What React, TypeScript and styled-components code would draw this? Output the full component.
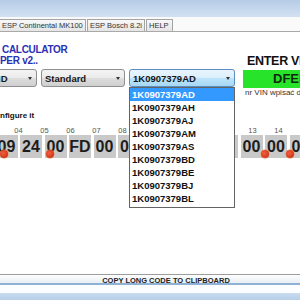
import React from "react";
import styled, { createGlobalStyle } from "styled-components";

const Global = createGlobalStyle`
  html, body { margin: 0; padding: 0; background: #fff; }
  body { font-family: "Liberation Sans", Arial, sans-serif; }
`;

const Frame = styled.div`
  width: 300px;
  height: 300px;
  overflow: hidden;
  display: flex;
  flex-direction: column;
  background: #fff;
`;

const TitleBar = styled.div`
  height: 17px;
  flex: none;
  background: linear-gradient(#b6cce6, #d2e1f2);
`;

const TabStrip = styled.div`
  height: 14px;
  flex: none;
  display: flex;
  align-items: flex-end;
  gap: 1px;
  background: #fafafa;
  border-bottom: 1px solid #a9a9a9;
`;

const Tab = styled.div<{ $w: number; $ml?: number }>`
  width: ${(p) => p.$w}px;
  margin-left: ${(p) => p.$ml ?? 0}px;
  height: 12px;
  box-sizing: border-box;
  border: 1px solid #a4a4a4;
  border-bottom: none;
  background: linear-gradient(#f8f8f8, #e5e5e5);
  font-size: 7.5px;
  line-height: 11px;
  color: #333;
  padding-left: 2px;
  white-space: nowrap;
  overflow: hidden;
`;

const Main = styled.div`
  flex: 1;
  display: flex;
  flex-direction: column;
`;

const TopSection = styled.div`
  display: flex;
  height: 66px;
  flex: none;
`;

const LeftPane = styled.div`
  width: 243px;
  flex: none;
  padding-top: 12px;
`;

const TitleLine = styled.div<{ $indent: number }>`
  color: #2b2fb5;
  font-weight: bold;
  font-size: 10px;
  line-height: 11px;
  letter-spacing: -0.3px;
  padding-left: ${(p) => p.$indent}px;
  white-space: nowrap;
`;

const ComboRow = styled.div`
  display: flex;
  gap: 4px;
  margin-top: 3px;
  margin-left: -18px;
`;

const ComboWrap = styled.div`
  position: relative;
`;

const Combo = styled.div<{ $w: number; $focus?: boolean; $pl?: number }>`
  width: ${(p) => p.$w}px;
  height: 18px;
  box-sizing: border-box;
  display: flex;
  align-items: center;
  justify-content: space-between;
  padding: 0 4px 0 ${(p) => p.$pl ?? 3}px;
  border: 1px solid ${(p) => (p.$focus ? "#5b8fc0" : "#8e8f8f")};
  border-radius: 3px;
  background: ${(p) =>
    p.$focus
      ? "linear-gradient(#eaf5fd 0%, #d9effc 50%, #bee3fb 51%, #a7d9f5 100%)"
      : "linear-gradient(#f3f3f3 0%, #ebebeb 50%, #dddddd 51%, #cfcfcf 100%)"};
  font-size: 9.5px;
  font-weight: bold;
  color: #151515;
  white-space: nowrap;
  overflow: hidden;
`;

const Arrow = styled.span`
  width: 0;
  height: 0;
  border-left: 2px solid transparent;
  border-right: 2px solid transparent;
  border-top: 3px solid #333;
  flex: none;
`;

const DropList = styled.div`
  position: absolute;
  top: 100%;
  left: 0;
  width: 106px;
  box-sizing: border-box;
  border: 1px solid #646464;
  background: #fff;
  padding-bottom: 2px;
  z-index: 5;
`;

const DropItem = styled.div<{ $active?: boolean }>`
  height: 13px;
  line-height: 13px;
  padding-left: 2px;
  font-size: 9.5px;
  font-weight: bold;
  color: ${(p) => (p.$active ? "#fff" : "#111")};
  background: ${(p) => (p.$active ? "#3399ff" : "transparent")};
`;

const RightPane = styled.div`
  flex: 1;
  min-width: 0;
  padding-top: 22px;
`;

const VinHeading = styled.div`
  font-size: 12.5px;
  line-height: 14px;
  font-weight: bold;
  color: #111;
  padding-left: 4px;
  letter-spacing: -0.3px;
  white-space: nowrap;
`;

const VinBox = styled.div`
  height: 18px;
  margin-top: 2px;
  background: #27e42b;
  color: #0d2a0d;
  font-size: 13px;
  font-weight: bold;
  line-height: 18px;
  padding-left: 30px;
  white-space: nowrap;
  overflow: hidden;
`;

const VinNote = styled.div`
  font-size: 8px;
  line-height: 10px;
  color: #333;
  padding-left: 2px;
  white-space: nowrap;
`;

const ConfigText = styled.div`
  margin-top: 13px;
  font-size: 8px;
  line-height: 10px;
  font-weight: bold;
  color: #111;
  white-space: nowrap;
`;

const LabelRow = styled.div`
  display: flex;
  margin-top: 5px;
  padding-left: 5.5px;
  height: 9px;
`;

const ByteLabel = styled.div`
  width: 26px;
  flex: none;
  text-align: center;
  font-size: 7.5px;
  line-height: 9px;
  color: #555;
`;

const HexRow = styled.div`
  display: flex;
  gap: 2.5px;
  margin-left: -4.5px;
`;

const HexBox = styled.div`
  position: relative;
  width: 22px;
  height: 23px;
  flex: none;
  background: #c9c9c9;
  text-align: center;
  font-size: 16px;
  font-weight: bold;
  line-height: 23px;
  color: #1d1d1d;
`;

const Dot = styled.span<{ $left: number }>`
  position: absolute;
  left: ${(p) => p.$left}px;
  top: 15px;
  width: 8px;
  height: 8px;
  border-radius: 50%;
  background: radial-gradient(circle at 40% 40%, #f2603d, #c4230e);
  box-shadow: 0 0 0 0.5px #e98a3c;
`;

const BottomArea = styled.div`
  margin-top: auto;
  flex: none;
  border-top: 1px solid #9d9d9d;
`;

const CopyButton = styled.div`
  height: 8px;
  line-height: 11px;
  background: linear-gradient(#fefefe, #e8eef5);
  border-bottom: 2px solid #8fb1d6;
  text-align: center;
  padding-left: 32px;
  font-size: 7.5px;
  font-weight: bold;
  color: #222;
  white-space: nowrap;
`;

const Spacer = styled.div`
  height: 8px;
  background: #fbfdff;
`;

const StatusBar = styled.div`
  height: 7px;
  background: linear-gradient(#c9dbef, #b7cfe9);
`;

const codes = [
  "1K0907379AD",
  "1K0907379AH",
  "1K0907379AJ",
  "1K0907379AM",
  "1K0907379AS",
  "1K0907379BD",
  "1K0907379BE",
  "1K0907379BJ",
  "1K0907379BL",
];

// bytes 03..15; 09-12 sit under the open drop-down list
const bytes: { v: string; dot?: number }[] = [
  { v: "09", dot: 4.5 },
  { v: "24" },
  { v: "00", dot: 1.5 },
  { v: "FD" },
  { v: "00" },
  { v: "00" },
  { v: "" },
  { v: "" },
  { v: "" },
  { v: "" },
  { v: "00" },
  { v: "00", dot: -4 },
  { v: "00", dot: -3.5 },
];

const labels = ["04", "05", "06", "07", "08", "", "", "", "", "13", "14", "15"];

export default function App() {
  return (
    <>
      <Global />
      <Frame>
        <TitleBar />
        <TabStrip>
          <Tab $w={87} $ml={-1}>ESP Continental MK100</Tab>
          <Tab $w={58}>ESP Bosch 8.2i</Tab>
          <Tab $w={27}>HELP</Tab>
        </TabStrip>
        <Main>
          <TopSection>
            <LeftPane>
              <TitleLine $indent={2}>CALCULATOR</TitleLine>
              <TitleLine $indent={0}>PER v2..</TitleLine>
              <ComboRow>
                <Combo $w={55} $pl={15}>
                  <span>ID</span>
                  <Arrow />
                </Combo>
                <Combo $w={84}>
                  <span>Standard</span>
                  <Arrow />
                </Combo>
                <ComboWrap>
                  <Combo $w={106} $focus>
                    <span>1K0907379AD</span>
                    <Arrow />
                  </Combo>
                  <DropList>
                    {codes.map((c, i) => (
                      <DropItem key={c} $active={i === 0}>
                        {c}
                      </DropItem>
                    ))}
                  </DropList>
                </ComboWrap>
              </ComboRow>
            </LeftPane>
            <RightPane>
              <VinHeading>ENTER VIN</VinHeading>
              <VinBox>DFEIWZZZ</VinBox>
              <VinNote>nr VIN wpisać dużymi literami</VinNote>
            </RightPane>
          </TopSection>
          <ConfigText>nfigure it</ConfigText>
          <LabelRow>
            {labels.map((l, i) => (
              <ByteLabel key={i}>{l}</ByteLabel>
            ))}
          </LabelRow>
          <HexRow>
            {bytes.map((b, i) => (
              <HexBox key={i}>
                {b.v}
                {b.dot !== undefined && <Dot $left={b.dot} />}
              </HexBox>
            ))}
          </HexRow>
          <BottomArea>
            <CopyButton>COPY LONG CODE TO CLIPBOARD</CopyButton>
            <Spacer />
            <StatusBar />
          </BottomArea>
        </Main>
      </Frame>
    </>
  );
}
